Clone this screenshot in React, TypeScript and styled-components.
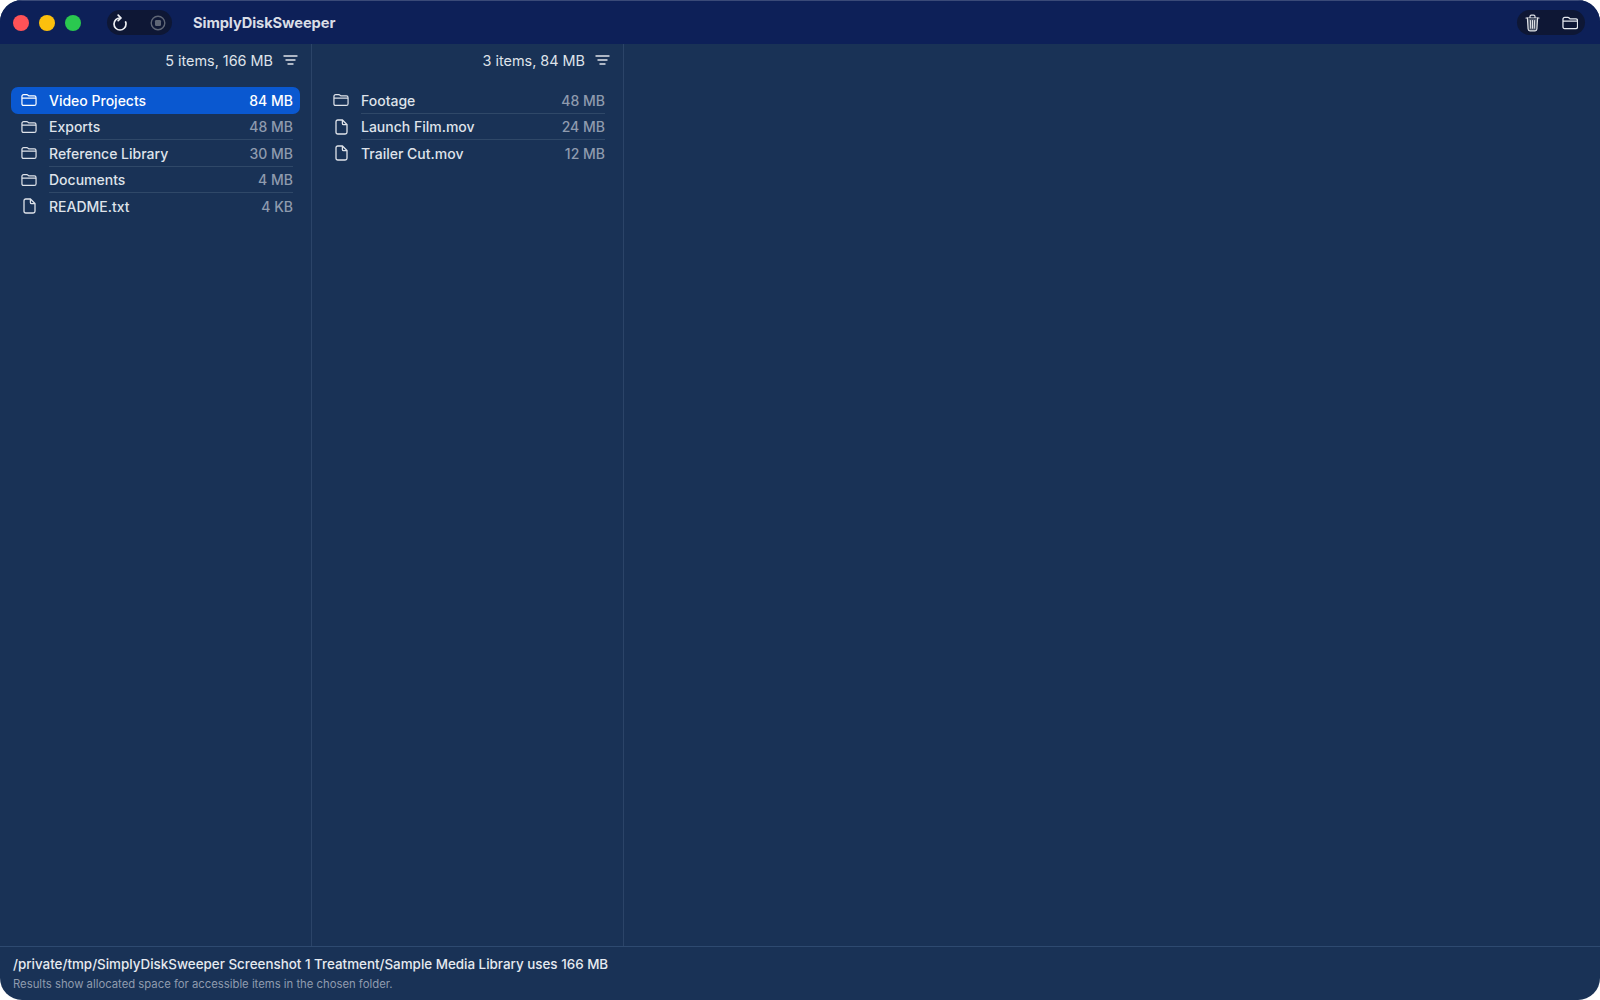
import styled, { createGlobalStyle } from "styled-components";

const GlobalStyle = createGlobalStyle`
  html, body {
    margin: 0;
    padding: 0;
    background: #fff;
  }
  body {
    font-family: Inter, "Liberation Sans", sans-serif;
    -webkit-font-smoothing: antialiased;
  }
`;

const Window = styled.div`
  display: flex;
  flex-direction: column;
  width: 1600px;
  height: 1000px;
  border-radius: 22px;
  overflow: hidden;
  background: #193256;
  color: #e6eaf0;
`;

const Toolbar = styled.header`
  display: flex;
  align-items: center;
  flex: 0 0 44px;
  box-sizing: border-box;
  padding: 0 15px 0 13px;
  background: #0d2058;
  border-top: 1px solid #3a4a78;
`;

const Lights = styled.div`
  display: flex;
  gap: 10px;
  margin-right: 26px;
`;

const Light = styled.span<{ $color: string }>`
  width: 16px;
  height: 16px;
  border-radius: 50%;
  background: ${(p) => p.$color};
`;

const Pill = styled.div`
  display: flex;
  align-items: center;
  justify-content: space-between;
  box-sizing: border-box;
  height: 25px;
  padding: 0 6px 0 5px;
  border-radius: 13px;
  background: #0e1735;
`;

const LeftPill = styled(Pill)`
  width: 65px;
`;

const RightPill = styled(Pill)`
  width: 68px;
  padding: 0 7px 0 8px;
  margin-left: auto;
`;

const Title = styled.h1`
  margin: 0 0 0 21px;
  font-size: 14.7px;
  font-weight: 700;
  letter-spacing: -0.1px;
  color: #d9dde6;
`;

const Columns = styled.main`
  display: flex;
  flex: 1;
  min-height: 0;
`;

const Column = styled.section`
  flex: 0 0 312px;
  box-sizing: border-box;
  border-right: 1px solid #2b4468;
`;

const ColumnHead = styled.div`
  display: flex;
  align-items: center;
  justify-content: flex-end;
  gap: 10px;
  height: 32px;
  padding-right: 13px;
  font-size: 14.4px;
  color: #dfe3ea;
`;

const List = styled.ul`
  list-style: none;
  margin: 11px 0 0;
  padding: 0 11px;
`;

const Row = styled.li<{ $selected?: boolean }>`
  position: relative;
  display: flex;
  align-items: center;
  height: 26.5px;
  padding: 0 7px 0 10px;
  border-radius: 7px;
  font-size: 14px;
  font-weight: 450;
  color: ${(p) => (p.$selected ? "#fff" : "#dfe3ea")};
  background: ${(p) => (p.$selected ? "#0a58d0" : "transparent")};

  &:not(:last-child)::after {
    content: "";
    position: absolute;
    left: 38px;
    right: 7px;
    bottom: 0;
    height: 1px;
    background: ${(p) => (p.$selected ? "transparent" : "#2f4868")};
  }
`;

const RowIcon = styled.span`
  display: flex;
  justify-content: center;
  flex: 0 0 16px;
  min-width: 0;
  margin-right: 12px;
`;

const RowName = styled.span`
  flex: 1;
`;

const RowSize = styled.span<{ $selected?: boolean }>`
  color: ${(p) => (p.$selected ? "#fff" : "#8f9bae")};
  font-weight: ${(p) => (p.$selected ? 500 : 450)};
`;

const StatusBar = styled.footer`
  flex: 0 0 54px;
  box-sizing: border-box;
  padding: 9px 13px 0;
  border-top: 1px solid #2e4a70;
`;

const StatusMain = styled.div`
  font-size: 13.4px;
  font-weight: 500;
  color: #e6eaf0;
`;

const StatusNote = styled.div`
  margin-top: 5px;
  font-size: 11.3px;
  color: #8f9bae;
`;

const FolderIcon = () => (
  <svg width="16.5" height="14" viewBox="0 0 17 14" fill="none" stroke="currentColor" strokeWidth="1.3">
    <path d="M1 3.2C1 2 1.7 1.3 2.9 1.3H6C6.8 1.3 7.2 1.6 7.7 2.1L8.3 2.7H14.2C15.4 2.7 16 3.4 16 4.6V10.9C16 12.1 15.4 12.8 14.2 12.8H2.8C1.6 12.8 1 12.1 1 10.9V3.2Z" />
    <path d="M1 5H16" />
  </svg>
);

const FileIcon = () => (
  <svg width="13" height="16" viewBox="0 0 13 16" fill="none" stroke="currentColor" strokeWidth="1.3">
    <path d="M2.8 1H7.4L12 5.6V13.2C12 14.3 11.3 15 10.2 15H2.8C1.7 15 1 14.3 1 13.2V2.8C1 1.7 1.7 1 2.8 1Z" />
    <path d="M7.4 1V4.4C7.4 5.2 7.9 5.6 8.6 5.6H12" />
  </svg>
);

const FilterIcon = () => (
  <svg width="15" height="10" viewBox="0 0 15 10" fill="none" stroke="#dfe3ea" strokeWidth="1.4" strokeLinecap="round">
    <path d="M1 1H14M3 5H12M5 9H10" />
  </svg>
);

const ReloadIcon = () => (
  <svg width="16" height="18" viewBox="0 0 16 18" fill="none" stroke="#eef0f4" strokeWidth="1.7" strokeLinecap="round" strokeLinejoin="round">
    <path d="M8.4 4C4.8 3.8 2 6.4 2 10C2 13.3 4.7 16 8 16C11.3 16 14 13.3 14 10C14 9.2 13.9 8.6 13.6 8" />
    <path d="M6.2 1.2L9 4L6.2 6.6" />
  </svg>
);

const StopIcon = () => (
  <svg width="16" height="16" viewBox="0 0 16 16" fill="none">
    <circle cx="8" cy="8" r="6.8" stroke="#5f6676" strokeWidth="1.4" />
    <rect x="5" y="5" width="6" height="6" rx="1.2" fill="#5f6676" />
  </svg>
);

const TrashIcon = () => (
  <svg width="15" height="18" viewBox="0 0 15 18" fill="none" stroke="#e0e3e8" strokeWidth="1.2" strokeLinecap="round">
    <path d="M1 4H14" />
    <path d="M5 4V2.6C5 1.7 5.6 1.2 6.4 1.2H8.6C9.4 1.2 10 1.7 10 2.6V4" />
    <path d="M2.4 4L3.1 15C3.2 16.1 3.8 16.8 4.9 16.8H10.1C11.2 16.8 11.8 16.1 11.9 15L12.6 4" fill="#4c5568" />
    <path d="M5.4 6.5L5.7 14.3M7.5 6.5V14.3M9.6 6.5L9.3 14.3" strokeWidth="1" />
  </svg>
);

type Item = { name: string; size: string; folder?: boolean };

const firstColumn: Item[] = [
  { name: "Video Projects", size: "84 MB", folder: true },
  { name: "Exports", size: "48 MB", folder: true },
  { name: "Reference Library", size: "30 MB", folder: true },
  { name: "Documents", size: "4 MB", folder: true },
  { name: "README.txt", size: "4 KB" },
];

const secondColumn: Item[] = [
  { name: "Footage", size: "48 MB", folder: true },
  { name: "Launch Film.mov", size: "24 MB" },
  { name: "Trailer Cut.mov", size: "12 MB" },
];

const FileColumn = ({ summary, items, selected }: { summary: string; items: Item[]; selected?: string }) => (
  <Column>
    <ColumnHead>
      <span>{summary}</span>
      <FilterIcon />
    </ColumnHead>
    <List>
      {items.map((item) => {
        const isSelected = item.name === selected;
        return (
          <Row key={item.name} $selected={isSelected}>
            <RowIcon>{item.folder ? <FolderIcon /> : <FileIcon />}</RowIcon>
            <RowName>{item.name}</RowName>
            <RowSize $selected={isSelected}>{item.size}</RowSize>
          </Row>
        );
      })}
    </List>
  </Column>
);

const App = () => (
  <>
    <GlobalStyle />
    <Window>
      <Toolbar>
        <Lights>
          <Light $color="#ff5257" />
          <Light $color="#fcc00d" />
          <Light $color="#2ac84f" />
        </Lights>
        <LeftPill>
          <ReloadIcon />
          <StopIcon />
        </LeftPill>
        <Title>SimplyDiskSweeper</Title>
        <RightPill>
          <TrashIcon />
          <FolderIcon />
        </RightPill>
      </Toolbar>
      <Columns>
        <FileColumn summary="5 items, 166 MB" items={firstColumn} selected="Video Projects" />
        <FileColumn summary="3 items, 84 MB" items={secondColumn} />
      </Columns>
      <StatusBar>
        <StatusMain>/private/tmp/SimplyDiskSweeper Screenshot 1 Treatment/Sample Media Library uses 166 MB</StatusMain>
        <StatusNote>Results show allocated space for accessible items in the chosen folder.</StatusNote>
      </StatusBar>
    </Window>
  </>
);

export default App;
